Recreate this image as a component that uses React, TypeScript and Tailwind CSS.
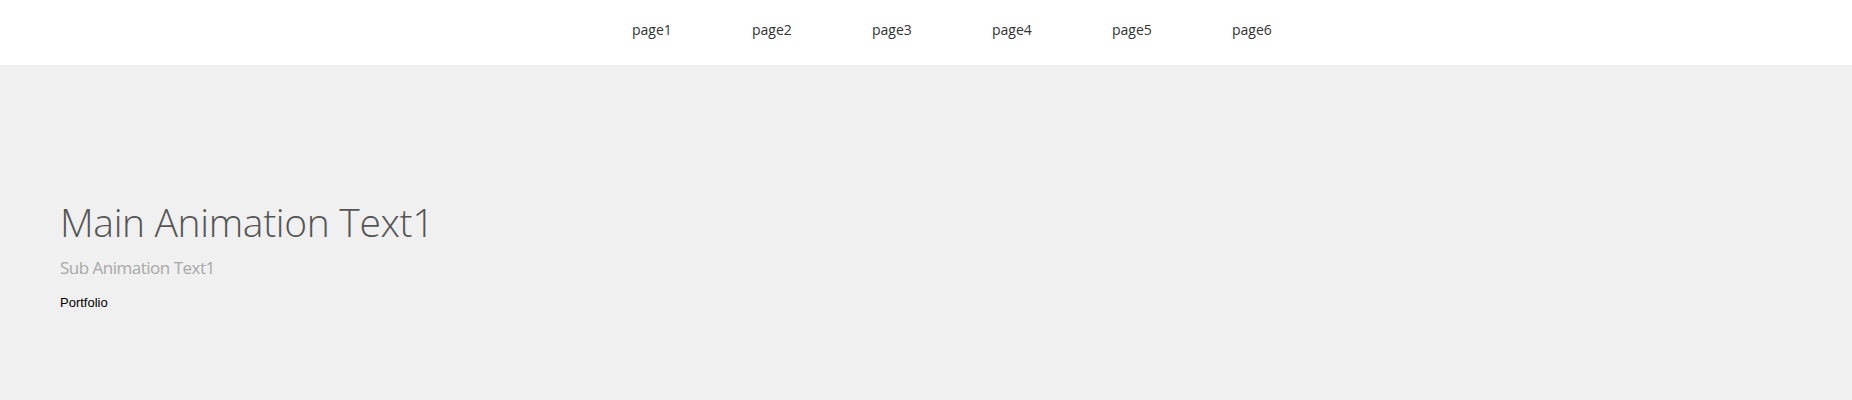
export default function App() {
  const pages = ["page1", "page2", "page3", "page4", "page5", "page6"];
  return (
    <div className="w-full min-h-[400px] bg-[#f0f0f0]">
      <header className="h-[65px] bg-white flex items-center justify-center pl-[52px]">
        <ul className="flex">
          {pages.map((p) => (
            <li key={p} className="w-[120px] pl-[40px] text-[14px] text-[#333] font-['Open_Sans',sans-serif] leading-none -mt-[5px]">
              {p}
            </li>
          ))}
        </ul>
      </header>
      <section className="pl-[60px] pt-[133px]">
        <h1 className="font-['Open_Sans',sans-serif] font-light text-[39px] leading-[48px] tracking-[-0.35px] text-[#555]">
          Main Animation Text1
        </h1>
        <p className="mt-[10px] font-['Open_Sans',sans-serif] text-[17px] leading-[24px] tracking-[-0.5px] text-[#a8a8a8]">
          Sub Animation Text1
        </p>
        <p className="mt-[15px] font-['Liberation_Sans',Arial,sans-serif] text-[13px] leading-[16px] text-black">
          Portfolio
        </p>
      </section>
    </div>
  );
}
